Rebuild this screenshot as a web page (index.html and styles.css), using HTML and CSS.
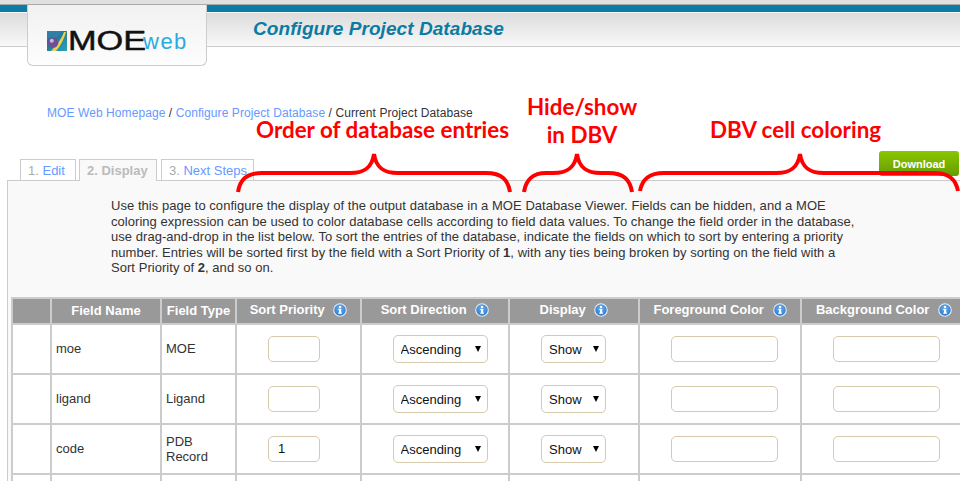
FILE: index.html
```html
<!DOCTYPE html>
<html lang="en">
<head>
<meta charset="utf-8">
<title>Configure Project Database</title>
<link rel="stylesheet" href="styles.css">
</head>
<body>
<svg class="defs" width="0" height="0" aria-hidden="true">
  <defs>
    <radialGradient id="infoFill" cx="50%" cy="35%" r="70%">
      <stop offset="0" stop-color="#6fb2ee"/>
      <stop offset="1" stop-color="#1f6fc4"/>
    </radialGradient>
    <linearGradient id="markFill" x1="0" y1="0" x2="1" y2="1">
      <stop offset="0" stop-color="#1d5f86"/>
      <stop offset="1" stop-color="#2aa3b8"/>
    </linearGradient>
    <symbol id="info" viewBox="0 0 14 14">
      <circle cx="7" cy="7" r="6.3" fill="url(#infoFill)" stroke="#e6eef8" stroke-width="1.1"/>
      <rect x="6" y="6" width="2.2" height="4.4" fill="#fff"/>
      <rect x="5.2" y="6" width="1.2" height="1" fill="#fff"/>
      <rect x="5.2" y="9.6" width="3.9" height="1.1" fill="#fff"/>
      <circle cx="7" cy="4" r="1.2" fill="#fff"/>
    </symbol>
  </defs>
</svg>

<header class="top">
  <div class="logo">
    <svg class="logo-mark" width="20" height="20" viewBox="0 0 20 20" aria-hidden="true">
      <rect width="20" height="20" fill="url(#markFill)"/>
      <path d="M0 0 H15 Q11 6 8 8 Q3 5 0 9Z" fill="#2f7fa6"/>
      <path d="M17 1 Q14 10 4 20 H9 Q16 12 19 1Z" fill="#f0d050"/>
      <circle cx="6.2" cy="11.5" r="5.2" fill="#6d4f96"/>
      <circle cx="4.8" cy="9.8" r="2" fill="#c9b8df"/>
    </svg>
    <span class="logo-moe">MOE</span><span class="logo-web">web</span>
  </div>
  <h1 class="title">Configure Project Database</h1>
</header>

<nav class="crumbs">
  <a href="#">MOE Web Homepage</a> / <a href="#">Configure Project Database</a> / Current Project Database
</nav>

<div class="tabbar">
  <ul class="tabs">
    <li class="tab tab-edit"><span class="num">1.</span> <a href="#">Edit</a></li>
    <li class="tab tab-display active">2. Display</li>
    <li class="tab tab-next"><span class="num">3.</span> <a href="#">Next Steps</a></li>
  </ul>
  <button class="download" type="button">Download</button>
</div>

<main class="panel">
  <p class="intro">Use this page to configure the display of the output database in a MOE Database Viewer. Fields can be hidden, and a MOE<br>
  coloring expression can be used to color database cells according to field data values. To change the field order in the database,<br>
  use drag-and-drop in the list below. To sort the entries of the database, indicate the fields on which to sort by entering a priority<br>
  number. Entries will be sorted first by the field with a Sort Priority of <b>1</b>, with any ties being broken by sorting on the field with a<br>
  Sort Priority of <b>2</b>, and so on.</p>

  <table class="fields">
    <colgroup>
      <col class="c0"><col class="c1"><col class="c2"><col class="c3"><col class="c4"><col class="c5"><col class="c6"><col class="c7">
    </colgroup>
    <thead>
      <tr>
        <th></th>
        <th>Field Name</th>
        <th>Field Type</th>
        <th class="raised">Sort Priority <svg class="info"><use href="#info"/></svg></th>
        <th class="raised">Sort Direction <svg class="info"><use href="#info"/></svg></th>
        <th class="raised">Display <svg class="info"><use href="#info"/></svg></th>
        <th class="raised">Foreground Color <svg class="info"><use href="#info"/></svg></th>
        <th class="raised">Background Color <svg class="info"><use href="#info"/></svg></th>
      </tr>
    </thead>
    <tbody>
      <tr>
        <td></td><td>moe</td><td>MOE</td>
        <td class="ctl"><input class="field prio" type="text"></td>
        <td class="ctl"><span class="pick dir"><select><option>Ascending</option><option>Descending</option></select></span></td>
        <td class="ctl"><span class="pick show"><select><option>Show</option><option>Hide</option></select></span></td>
        <td class="ctl"><input class="field color fg" type="text"></td>
        <td class="ctl"><input class="field color bg" type="text"></td>
      </tr>
      <tr>
        <td></td><td>ligand</td><td>Ligand</td>
        <td class="ctl"><input class="field prio" type="text"></td>
        <td class="ctl"><span class="pick dir"><select><option>Ascending</option><option>Descending</option></select></span></td>
        <td class="ctl"><span class="pick show"><select><option>Show</option><option>Hide</option></select></span></td>
        <td class="ctl"><input class="field color fg" type="text"></td>
        <td class="ctl"><input class="field color bg" type="text"></td>
      </tr>
      <tr>
        <td></td><td>code</td><td>PDB<br>Record</td>
        <td class="ctl"><input class="field prio" type="text" value="1"></td>
        <td class="ctl"><span class="pick dir"><select><option>Ascending</option><option>Descending</option></select></span></td>
        <td class="ctl"><span class="pick show"><select><option>Show</option><option>Hide</option></select></span></td>
        <td class="ctl"><input class="field color fg" type="text"></td>
        <td class="ctl"><input class="field color bg" type="text"></td>
      </tr>
      <tr>
        <td></td><td></td><td></td><td></td><td></td><td></td><td></td><td></td>
      </tr>
    </tbody>
  </table>
</main>

<svg class="braces" width="960" height="200" viewBox="0 0 960 200" aria-hidden="true">
  <path d="M238 192 C240 180 246 173 262 173 L350 173 C364 173 372 168 374 154 C376 168 384 173 398 173 L486 173 C502 173 508 180 510 192"/>
  <path d="M524 192 C526 180 532 173 546 173 L553 173 C567 173 575 168 577 154 C579 168 587 173 601 173 L608 173 C624 173 630 180 632 192"/>
  <path d="M640 191 C642 180 648 173 664 173 L776 173 C790 173 798 168 800 154 C802 168 810 173 824 173 L934 173 C950 173 956 180 958 191"/>
</svg>
<div class="note note-order">Order of database entries</div>
<div class="note note-hide">Hide/show<br>in DBV</div>
<div class="note note-color">DBV cell coloring</div>
</body>
</html>
```

FILE: styles.css
```css
* { box-sizing: border-box; }
html, body { margin: 0; height: 481px; overflow: hidden; }
body {
  position: relative;
  background: #fff;
  color: #333;
  font: 13px/15px "Liberation Sans", Arial, sans-serif;
}
a { color: #69f; text-decoration: none; }
.defs { position: absolute; }

/* header */
.top {
  display: flex;
  height: 47px;
  padding-left: 27px;
  background: linear-gradient(#e0e0e0 0 4px, #aaa 4px 5px, #0a7ca6 5px 12px, #fff 12px 13px, #dcdcdc 13px, #f8f8f8 46px);
  border-bottom: 1px solid #ccc;
}
.logo {
  display: flex;
  align-items: flex-start;
  flex: none;
  width: 180px;
  height: 61px;
  margin-top: 5px;
  padding: 26px 0 0 19px;
  background: linear-gradient(#f1f1f1, #fdfdfd);
  border: 1px solid #ccc;
  border-top: 0;
  border-radius: 0 0 6px 6px;
}
.logo-mark { flex: none; }
.logo-moe {
  display: inline-block;
  width: 75px;
  margin: -5px 0 0 1px;
  color: #111;
  font: 400 27px/30px "Liberation Sans", Arial, sans-serif;
  -webkit-text-stroke: .5px #111;
  transform: scaleX(1.27);
  transform-origin: left center;
}
.logo-web {
  margin-top: -1px;
  color: #29abe2;
  font: 400 22px/24px "Liberation Sans", Arial, sans-serif;
  letter-spacing: 1.5px;
}
.title {
  margin: 18px 0 0 46px;
  color: #0b7ba3;
  font: italic 700 19px/22px "Liberation Sans", Arial, sans-serif;
  letter-spacing: .07px;
}

/* breadcrumb */
.crumbs {
  margin: 60px 0 0 47px;
  font-size: 12px;
  line-height: 12px;
  letter-spacing: .08px;
}

/* tabs */
.tabbar {
  display: flex;
  justify-content: space-between;
  align-items: flex-end;
  height: 30px;
  margin-top: 31px;
  padding: 0 1px 0 20px;
}
.tabs {
  display: flex;
  margin: 0;
  padding: 0;
  list-style: none;
}
.tab {
  height: 21px;
  padding: 3px 0 0 7px;
  border: 1px solid #ccc;
  border-bottom: 0;
  font-size: 13px;
}
.tab-edit { width: 56px; margin-right: 3px; }
.tab-display { width: 78px; margin-right: 4px; }
.tab-next { width: 93px; }
.tab .num { color: #aaa; }
.tab.active {
  position: relative;
  z-index: 1;
  height: 22px;
  margin-bottom: -1px;
  background: #f9f9f9;
  color: #bbb;
  font-weight: 700;
}
.download {
  width: 80px;
  height: 25px;
  margin-bottom: 4px;
  padding: 1px 0 0;
  background: linear-gradient(#8ac600, #649d00);
  border: 0;
  border-radius: 3px;
  color: #fff;
  font: 700 11px/24px "Liberation Sans", Arial, sans-serif;
}

/* panel */
.panel {
  width: 953px;
  height: 301px;
  margin-left: 7px;
  padding: 17px 0 0 3px;
  overflow: hidden;
  background: #f9f9f9;
  border: 1px solid #ccc;
  border-width: 1px 0 0 1px;
}
.intro {
  margin: 0 0 21px 100px;
  line-height: 15.5px;
  letter-spacing: .045px;
  white-space: nowrap;
}

/* table */
.fields {
  table-layout: fixed;
  width: 955px;
  border-collapse: collapse;
  background: #fff;
}
.c0 { width: 39px; }
.c1 { width: 110px; }
.c2 { width: 75px; }
.c3 { width: 125px; }
.c4 { width: 148px; }
.c5 { width: 130px; }
.c6 { width: 162px; }
.c7 { width: 166px; }
.fields th, .fields td { border: 2px solid #ccc; }
.fields thead tr { height: 26px; }
.fields tbody tr { height: 50px; }
.fields th {
  padding: 0;
  background: #999;
  color: #fff;
  font-weight: 700;
  text-align: center;
  white-space: nowrap;
}
.fields th.raised { padding-bottom: 2px; }
.fields td { padding: 0 4px; }
.fields td.ctl { padding: 0; text-align: center; }
.info {
  width: 14px;
  height: 14px;
  margin-left: 5px;
  vertical-align: -3px;
}
.field {
  display: inline-block;
  height: 26px;
  padding: 0 9px;
  background: #fff;
  border: 1px solid #d6c9ae;
  border-radius: 5px;
  color: #111;
  font: 13px "Liberation Sans", Arial, sans-serif;
  vertical-align: middle;
}
.prio { width: 52px; margin-right: 9px; }
.color { width: 107px; }
.fg { margin-left: 8px; }
.bg { margin-left: 4px; }
.pick {
  position: relative;
  display: inline-block;
  vertical-align: middle;
}
.pick select {
  display: block;
  width: 100%;
  height: 28px;
  padding: 2px 0 0 7px;
  appearance: none;
  background: #fff;
  border: 1px solid #d6c9ae;
  border-radius: 5px;
  color: #111;
  font: 13px "Liberation Sans", Arial, sans-serif;
}
.pick::after {
  content: "";
  position: absolute;
  top: 11px;
  right: 7px;
  border: 3px solid transparent;
  border-top: 6px solid #000;
  border-bottom: 0;
}
.dir { width: 95px; margin-left: 10px; }
.show { width: 65px; margin-right: 1px; }

/* annotations laid over the page */
.braces {
  position: absolute;
  top: 0;
  left: 0;
  fill: none;
  stroke: #f00;
  stroke-width: 4;
  pointer-events: none;
}
.note {
  position: absolute;
  color: #f00;
  font: 700 22.4px/22px Lato, "Open Sans", sans-serif;
  text-align: center;
  white-space: nowrap;
}
.note-order { top: 119px; left: 256px; }
.note-hide { top: 93px; left: 527px; line-height: 28px; }
.note-color { top: 119px; left: 710px; }
```
